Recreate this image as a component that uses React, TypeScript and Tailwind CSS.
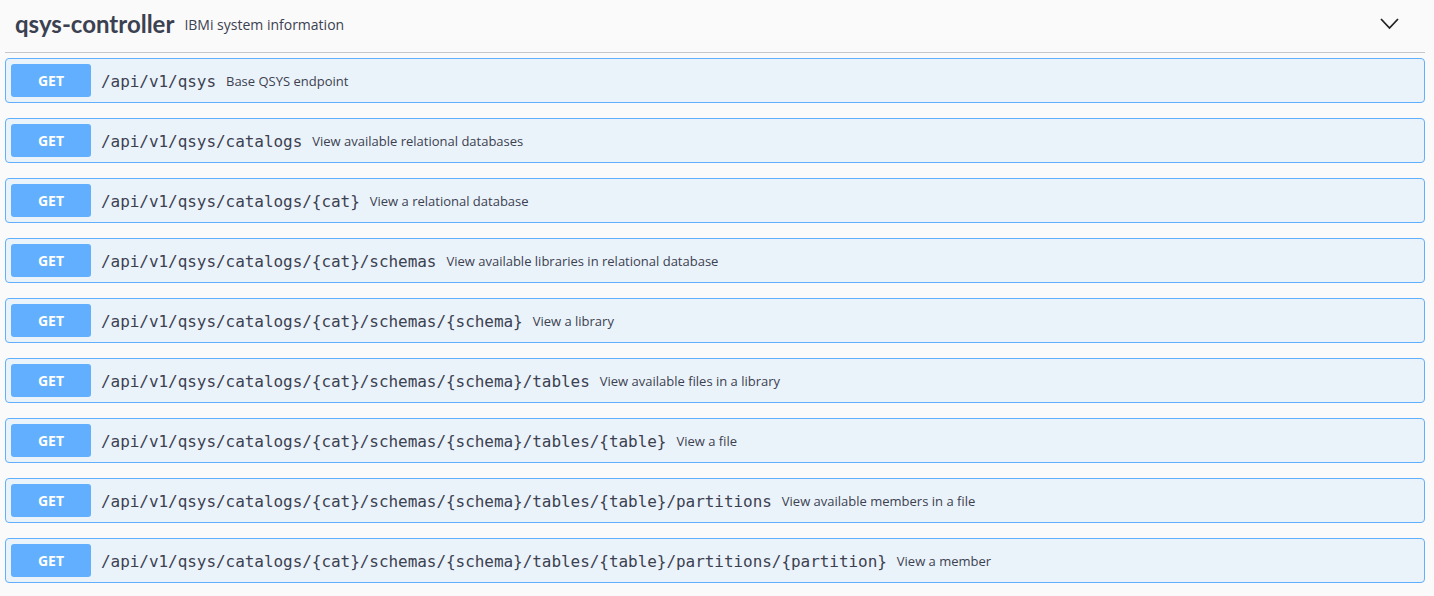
const ops = [
  { path: '/api/v1/qsys', summary: 'Base QSYS endpoint' },
  { path: '/api/v1/qsys/catalogs', summary: 'View available relational databases' },
  { path: '/api/v1/qsys/catalogs/{cat}', summary: 'View a relational database' },
  { path: '/api/v1/qsys/catalogs/{cat}/schemas', summary: 'View available libraries in relational database' },
  { path: '/api/v1/qsys/catalogs/{cat}/schemas/{schema}', summary: 'View a library' },
  { path: '/api/v1/qsys/catalogs/{cat}/schemas/{schema}/tables', summary: 'View available files in a library' },
  { path: '/api/v1/qsys/catalogs/{cat}/schemas/{schema}/tables/{table}', summary: 'View a file' },
  {
    path: '/api/v1/qsys/catalogs/{cat}/schemas/{schema}/tables/{table}/partitions',
    summary: 'View available members in a file',
  },
  {
    path: '/api/v1/qsys/catalogs/{cat}/schemas/{schema}/tables/{table}/partitions/{partition}',
    summary: 'View a member',
  },
]

function OpBlock({ path, summary }: { path: string; summary: string }) {
  return (
    <div className="mb-[15px] flex items-center rounded-[4px] border border-[#61affe] bg-[#ebf3fa] p-[5px]">
      <div className="flex h-[33px] w-[80px] items-center justify-center rounded-[3px] bg-[#61affe] text-[14px] font-bold text-white [font-family:'Open_Sans',sans-serif]">
        GET
      </div>
      <span className="mt-[2px] pl-[10px] pr-[10px] text-[16px] tracking-[-0.05px] text-[#3b4151] [font-family:'DejaVu_Sans_Mono',monospace]">
        {path}
      </span>
      <span className="mt-[2px] text-[13px] text-[#3b4151] [font-family:'Open_Sans',sans-serif]">{summary}</span>
    </div>
  )
}

export default function App() {
  return (
    <div className="min-h-[596px] w-full bg-[#fafafa]">
      <div className="ml-[5px] w-[1420px]">
        <div className="mb-[5px] flex h-[53px] items-center border-b border-[#c4c6cb] pb-[5px] pl-[10px] pr-[20px]">
          <span className="text-[24px] font-bold leading-none text-[#3b4151] [font-family:Lato,sans-serif]">
            qsys-controller
          </span>
          <span className="ml-[10px] mt-[2px] text-[14px] text-[#3b4151] [font-family:'Open_Sans',sans-serif]">
            IBMi system information
          </span>
          <div className="flex-1" />
          <svg width="20" height="12" viewBox="0 0 20 12" className="mr-[5px]">
            <polyline points="1,1 9.5,10 18,1" fill="none" stroke="#222" strokeWidth="1.8" />
          </svg>
        </div>
        {ops.map((op) => (
          <OpBlock key={op.path} path={op.path} summary={op.summary} />
        ))}
      </div>
    </div>
  )
}
